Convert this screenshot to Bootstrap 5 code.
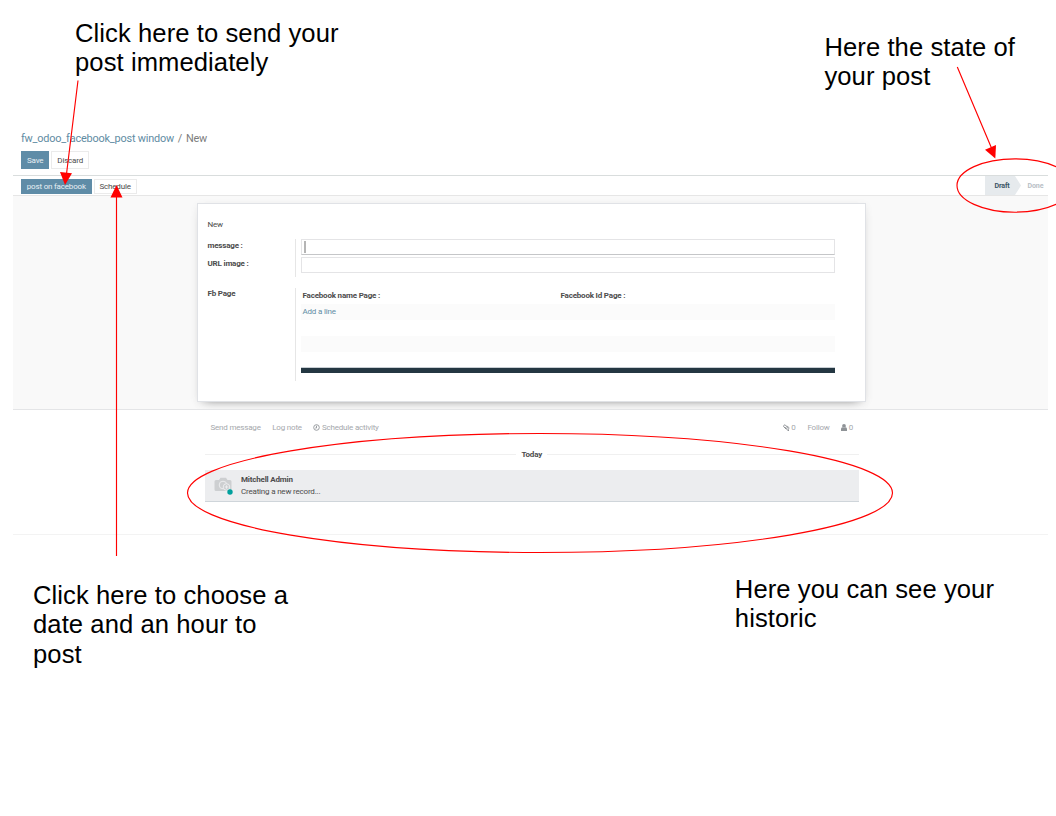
<!DOCTYPE html>
<html lang="en">
<head>
<meta charset="utf-8">
<meta name="viewport" content="width=device-width, initial-scale=1">
<title>Facebook post window guide</title>
<link rel="stylesheet" href="https://cdn.jsdelivr.net/npm/bootstrap@5.3.0/dist/css/bootstrap.min.css">
<style>
body{width:1056px;height:816px;overflow:hidden;position:relative;background:#fff;font-family:Roboto,sans-serif;font-size:8px;letter-spacing:-.19px;line-height:12px;color:#4c4c4c}
.note{font-family:"Liberation Sans",Arial,sans-serif;font-size:25.6px;letter-spacing:.08px;line-height:29.4px;color:#000;white-space:nowrap}
.notes-top{height:131px;padding:19px 41px 0 75px}
.notes-bottom{padding:46px 62px 0 33px}
.window{width:1035px;margin-left:13px}
.crumbs{height:20px;padding:1px 8px 0;font-size:10.9px;letter-spacing:-.19px;line-height:14px;color:#7c7c7c}
.crumbs a,.add-line{color:#5f8ca3;text-decoration:none}
.crumbs .sep{margin:0 3.8px}
.act{font-size:8px;letter-spacing:-.19px;line-height:1;padding:0 5px;border-radius:0;border:1px solid #ebebeb;color:#4c4c4c;background:#fff}
.act.main{background:#5f8ca7;border-color:#5f8ca7;color:#e8f0f4}
.control{height:24px;padding-left:8px;gap:2px}
.control .act{height:18px;padding-top:1px}
.statusbar{height:21px;border-top:1px solid #d9dddd;border-bottom:1px solid #e6e6e6;padding-left:8px}
.statusbar .act{height:15px;padding-top:1px;padding-left:4.8px}
.stage{font-size:7.1px;letter-spacing:-.15px;font-weight:700;line-height:20px}
.draft{width:36px;padding-left:9.5px;color:#3c5566;background:#e6eaed;clip-path:polygon(0 0,30px 0,100% 50%,30px 100%,0 100%)}
.done{width:27px;padding-left:6.5px;color:#b9c0c6}
.form-bg{height:214px;background:#f9f9f9;border-bottom:1px solid #e4e5e7;padding:7px 0 0 184px;overflow:hidden}
.sheet{width:669px;height:199px;background:#fff;border:1px solid #e0e2e6;padding:15px 30px 0 9.5px;box-shadow:0 5px 10px -8px #0009,0 2px 8px #0000000f}
.group{display:grid;grid-template-columns:87px 1fr}
.group b{font-weight:700}
.fields{border-left:1px solid #e6e6e6;padding-left:5px}
.box{border:1px solid #e4e4e6;height:16px;padding:1px 2px}
.box.focus{border-bottom-color:#c5c6c8}
.caret{width:2px;height:12px;background:#b5b5b5}
.lines{height:64px}
.lines>div{height:16px;padding:2px 2px 0}
.lines>div:nth-child(odd){background:#fbfbfb}
.bar{height:6px;background:#243742;border-top:1px solid #c8ced3}
.chatter{height:125px;padding:11px 189px 0 191.5px;border-bottom:1px solid #f3f3f3}
.tools{height:13px;color:#a5a8ac;padding:0 6px 0 6px}
.rule{height:1px;background:#f0f0f0}
.msg{height:32px;background:#ecedef;border-bottom:1px solid #cfd5da;padding:4px 0 0 9px}
.overlay{position:absolute;left:0;top:0;pointer-events:none}
svg{display:block}
</style>
</head>
<body>
<header class="notes-top d-flex justify-content-between align-items-start">
  <div class="note">Click here to send your<br>post immediately</div>
  <div class="note" style="margin-top:14px">Here the state of<br>your post</div>
</header>

<main class="window">
  <nav class="crumbs"><a href="#">fw_odoo_facebook_post window</a><span class="sep">/</span>New</nav>
  <div class="control d-flex">
    <button class="btn act main">Save</button>
    <button class="btn act">Discard</button>
  </div>
  <div class="statusbar d-flex justify-content-between">
    <div class="d-flex align-items-center" style="gap:2px;padding-top:1px">
      <button class="btn act main">post on facebook</button>
      <button class="btn act">Schedule</button>
    </div>
    <div class="d-flex stage"><div class="draft">Draft</div><div class="done">Done</div></div>
  </div>

  <section class="form-bg">
    <div class="sheet">
      <div style="height:20px">New</div>
      <div class="group" style="height:49px">
        <div style="padding-top:1px"><b class="d-block" style="height:18px">message :</b><b>URL image :</b></div>
        <div class="fields" style="height:38px">
          <div class="box focus"><div class="caret"></div></div>
          <div class="box" style="margin-top:2px"></div>
        </div>
      </div>
      <div class="group">
        <b>Fb Page</b>
        <div class="fields" style="height:93px">
          <div class="d-flex" style="height:16px;padding:2px 2px 0"><b style="width:258px">Facebook name Page :</b><b>Facebook Id Page :</b></div>
          <div class="lines" style="height:63px"><div><a href="#" class="add-line">Add a line</a></div><div></div><div></div></div>
          <div class="bar"></div>
        </div>
      </div>
    </div>
  </section>

  <section class="chatter">
    <div class="tools d-flex align-items-center">
      <span style="margin-right:11.5px">Send message</span><span style="margin-right:11.5px">Log note</span>
      <svg width="7" height="7" viewBox="0 0 14 14" fill="none" stroke="#999da1" stroke-width="2" style="margin-right:1.5px"><circle cx="7" cy="7" r="5.6"/><path d="M7 3.5V8H4.5"/></svg>
      <span class="me-auto">Schedule activity</span>
      <svg width="7" height="7" viewBox="0 0 14 14" fill="none" stroke="#8f9397" stroke-width="2" style="margin-right:1px"><path d="M7 11 2 6a2.2 2.2 0 0 1 3-3.500l6.500 6.500a1.500 1.500 0 0 1-2 2L4.500 6M8 3.500l4 4M9 13l3 0"/></svg>
      <span style="margin-right:12px">0</span><span style="margin-right:11.500px">Follow</span>
      <svg width="6" height="7" viewBox="0 0 12 14" fill="#8f9397" style="margin-right:1.5px"><circle cx="6" cy="3.8" r="3.8"/><path d="M0 14V10Q0 7 3 6.500Q6 9 9 6.500Q12 7 12 10V14Z"/></svg>
      <span>0</span>
    </div>
    <div class="d-flex align-items-center" style="height:26px;padding-top:15px;margin-bottom:10px">
      <div class="rule flex-fill"></div><b style="margin:0 5px">Today</b><div class="rule flex-fill"></div>
    </div>
    <div class="msg d-flex">
      <svg width="20" height="22" viewBox="0 0 20 22" style="margin:3px 7.500px 0 0">
        <path d="M2 3H5L6.500 .7H12L13.500 3H16Q17.500 3 17.500 4.500V12.500Q17.500 14 16 14H2Q.5 14 .5 12.500V4.500Q.5 3 2 3Z" fill="#cdcfd1"/>
        <circle cx="9" cy="8" r="3.800" fill="none" stroke="#ecedef"/>
        <circle cx="12.500" cy="10" r="3.300" fill="#cdcfd1" stroke="#ecedef"/>
        <path d="M10.800 10h3.400M12.500 8.300v3.400" stroke="#ecedef"/>
        <circle cx="16" cy="15" r="2.700" fill="#00a09d"/>
      </svg>
      <div><b class="d-block">Mitchell Admin</b>Creating a new record...</div>
    </div>
  </section>
</main>

<footer class="notes-bottom d-flex justify-content-between align-items-start">
  <div class="note">Click here to choose a<br>date and an hour to<br>post</div>
  <div class="note" style="margin-top:-6px">Here you can see your<br>historic</div>
</footer>

<svg class="overlay" width="1056" height="816" fill="none" stroke="#f00" stroke-width="1.150">
  <path d="M78 80.500 66.500 174M116.500 556V196M957.300 67 991.500 148"/>
  <g fill="#f00" stroke="none"><path d="M65 185 60 172 72 173.300Z"/><path d="M116.500 185 110.500 197.500H122.500Z"/><path d="M995.300 158.500 985 149.800 996 145Z"/></g>
  <ellipse cx="1015" cy="185.500" rx="58" ry="26.700"/>
  <ellipse cx="540" cy="493" rx="352.500" ry="59.500"/>
</svg>
<script src="https://cdn.jsdelivr.net/npm/bootstrap@5.3.0/dist/js/bootstrap.bundle.min.js"></script>
</body>
</html>
